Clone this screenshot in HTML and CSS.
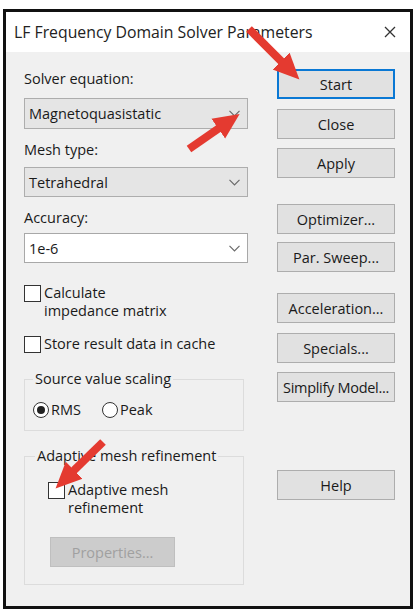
FILE: index.html
```html
<!DOCTYPE html>
<html>
<head>
<meta charset="utf-8">
<link rel="stylesheet" href="styles.css">
</head>
<body>
<div class="window">
  <div class="titlebar">
    <span class="title">LF Frequency Domain Solver Parameters</span>
    <svg class="close-x" width="12" height="12" viewBox="0 0 12 12"><path d="M1 1 L11 11 M11 1 L1 11" stroke="#333" stroke-width="1.3" fill="none"/></svg>
  </div>
  <div class="body">
    <div class="left">
      <div class="label l1">Solver equation:</div>
      <div class="combo grey c1"><span>Magnetoquasistatic</span><svg class="chev" width="11" height="7" viewBox="0 0 11 7"><path d="M0.5 0.8 L5.5 5.8 L10.5 0.8" stroke="#6a6a6a" stroke-width="1.2" fill="none"/></svg></div>
      <div class="label l2">Mesh type:</div>
      <div class="combo grey c2"><span>Tetrahedral</span><svg class="chev" width="11" height="7" viewBox="0 0 11 7"><path d="M0.5 0.8 L5.5 5.8 L10.5 0.8" stroke="#6a6a6a" stroke-width="1.2" fill="none"/></svg></div>
      <div class="label l3">Accuracy:</div>
      <div class="combo white c3"><span>1e-6</span><svg class="chev" width="11" height="7" viewBox="0 0 11 7"><path d="M0.5 0.8 L5.5 5.8 L10.5 0.8" stroke="#6a6a6a" stroke-width="1.2" fill="none"/></svg></div>
      <div class="check cb1"><span class="box"></span><span class="ctext">Calculate<br>impedance matrix</span></div>
      <div class="check cb2"><span class="box"></span><span class="ctext">Store result data in cache</span></div>
      <fieldset class="group g1">
        <legend>Source value scaling</legend>
        <div class="radios">
          <span class="radio"><span class="circle on"></span>RMS</span>
          <span class="radio r2"><span class="circle"></span>Peak</span>
        </div>
      </fieldset>
      <fieldset class="group g2">
        <legend>Adaptive mesh refinement</legend>
        <div class="check cb3"><span class="box"></span><span class="ctext">Adaptive mesh<br>refinement</span></div>
        <div class="btn disabled props">Properties...</div>
      </fieldset>
    </div>
    <div class="right">
      <div class="btn primary b-start">Start</div>
      <div class="btn b-close">Close</div>
      <div class="btn b-apply">Apply</div>
      <div class="btn b-opt">Optimizer...</div>
      <div class="btn b-par">Par. Sweep...</div>
      <div class="btn b-acc">Acceleration...</div>
      <div class="btn b-spec">Specials...</div>
      <div class="btn b-simp">Simplify Model...</div>
      <div class="btn b-help">Help</div>
    </div>
  </div>
</div>
<svg class="arrows" width="415" height="615" viewBox="0 0 415 615">
  <defs>
    <marker id="head" markerUnits="userSpaceOnUse" markerWidth="27" markerHeight="26" refX="10" refY="13" orient="auto">
      <path d="M0 1 L26 13 L0 25 Z" fill="#e43a30"/>
    </marker>
  </defs>
  <line x1="249" y1="29" x2="288.1" y2="68.1" stroke="#e43a30" stroke-width="8" marker-end="url(#head)"/>
  <line x1="189" y1="149" x2="226.5" y2="123" stroke="#e43a30" stroke-width="8" marker-end="url(#head)"/>
  <line x1="103" y1="442" x2="67" y2="477.2" stroke="#e43a30" stroke-width="8" marker-end="url(#head)"/>
</svg>
</body>
</html>
```
FILE: styles.css
```css
html, body {
  margin: 0;
  padding: 0;
  background: #ffffff;
}
body {
  position: relative;
  width: 415px;
  height: 615px;
  overflow: hidden;
  font-family: "Open Sans", "Noto Sans", sans-serif;
  font-size: 14.5px;
  color: #1a1a1a;
}
.window {
  box-sizing: border-box;
  margin: 9px 0 0 3px;
  width: 410px;
  height: 600px;
  border: 3px solid #111;
  background: #f0f0f0;
  display: flex;
  flex-direction: column;
}
.titlebar {
  height: 40px;
  background: #ffffff;
  display: flex;
  align-items: center;
  justify-content: space-between;
  padding: 0 12px 0 8px;
  flex: none;
}
.title {
  font-size: 15.8px;
  color: #222;
}
.close-x {
  display: block;
  margin-right: 2px;
}
.body {
  flex: 1;
  display: flex;
  padding-left: 18px;
}
.left {
  width: 224px;
  display: flex;
  flex-direction: column;
}
.right {
  width: 118px;
  margin-left: 29px;
  display: flex;
  flex-direction: column;
}
.label {
  height: 20px;
  line-height: 20px;
}
.l1 { margin-top: 17px; }
.l2 { margin-top: 11px; }
.l3 { margin-top: 11px; }
.combo {
  box-sizing: border-box;
  height: 30px;
  border: 1px solid #adadad;
  display: flex;
  align-items: center;
  justify-content: space-between;
  padding: 0 7px 0 4px;
}
.combo.grey { background: #e5e5e5; }
.combo.white { background: #ffffff; border-color: #a8a8a8; }
.c1 { margin-top: 9px; height: 31px; }
.c2 { margin-top: 7px; }
.c3 { margin-top: 5px; }
.chev { display: block; }
.check {
  display: flex;
  align-items: flex-start;
  line-height: 18px;
}
.box {
  box-sizing: border-box;
  width: 17px;
  height: 17px;
  border: 1px solid #333;
  background: #fff;
  margin-top: 1px;
  margin-right: 3px;
  flex: none;
}
.cb1 { margin-top: 21px; }
.cb2 { margin-top: 15px; }
.group {
  box-sizing: border-box;
  margin: 0;
  width: 220px;
  border: 1px solid #dcdcdc;
  padding: 0 0 0 8px;
}
.group legend {
  padding: 0 2px;
  line-height: 20px;
}
.g1 { margin-top: 16px; height: 62px; }
.g2 { margin-top: 15px; height: 139px; padding-left: 10px; }
.radios {
  display: flex;
  margin-top: 12px;
  line-height: 18px;
}
.radio {
  display: flex;
  align-items: center;
}
.r2 { margin-left: 21px; }
.circle {
  box-sizing: border-box;
  width: 16px;
  height: 16px;
  border: 1px solid #333;
  border-radius: 50%;
  background: #fff;
  margin-right: 2px;
  display: flex;
  align-items: center;
  justify-content: center;
}
.circle.on::after {
  content: "";
  width: 8px;
  height: 8px;
  border-radius: 50%;
  background: #222;
}
.cb3 { margin-top: 15px; margin-left: 13px; }
.btn {
  box-sizing: border-box;
  height: 30px;
  background: #e1e1e1;
  border: 1px solid #adadad;
  display: flex;
  align-items: center;
  justify-content: center;
  white-space: nowrap;
}
.btn.primary {
  border: 2px solid #0a78d4;
}
.btn.disabled {
  background: #cccccc;
  border-color: #bfbfbf;
  color: #a0a0a0;
}
.props {
  width: 125px;
  margin-top: 20px;
  margin-left: 15px;
}
.b-simp { letter-spacing: -0.3px; }
.b-start { margin-top: 17px; }
.b-close { margin-top: 10px; }
.b-apply { margin-top: 9px; }
.b-opt { margin-top: 26px; }
.b-par { margin-top: 8px; }
.b-acc { margin-top: 21px; }
.b-spec { margin-top: 10px; }
.b-simp { margin-top: 9px; }
.b-help { margin-top: 68px; }
.arrows {
  position: absolute;
  left: 0;
  top: 0;
  pointer-events: none;
}
```
